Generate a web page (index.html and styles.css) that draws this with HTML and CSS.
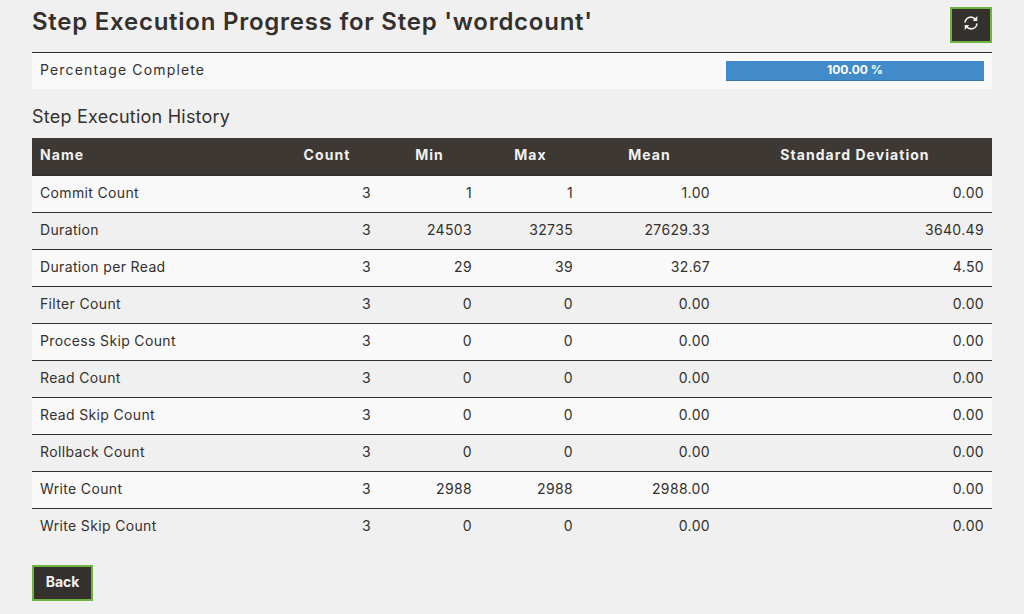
FILE: index.html
```
<!DOCTYPE html>
<html lang="en">
<head>
<meta charset="utf-8">
<title>Step Execution Progress</title>
<link rel="stylesheet" href="styles.css">
</head>
<body>
<main class="page">
<header class="page-header">
<h1 class="title"><span>Step Execution Progress for Step 'wordcount'</span></h1>
<button class="btn btn-refresh" aria-label="Refresh"><svg class="icon" viewBox="0 0 14 14" fill="none" stroke="currentColor" stroke-width="1.7"><path d="M1 6.500C1.300 3.200 4 1.200 7 1.200c2 0 3.500.9 4.600 2.300M13 7.500c-.3 3.300-3 5.300-6 5.300-2 0-3.500-.9-4.600-2.300"/><path d="M13.300 0v5H8.700zM.7 14V9h4.600z" fill="currentColor" stroke="none"/></svg></button>
</header>
<section class="progress-row">
<span class="progress-label">Percentage Complete</span>
<div class="progress-bar"><span>100.00 %</span></div>
</section>
<h2 class="subtitle"><span>Step Execution History</span></h2>
<table class="history">
<colgroup><col class="col-name"><col class="col-count"><col class="col-min"><col class="col-max"><col class="col-mean"><col></colgroup>
<thead><tr><th class="name">Name</th><th>Count</th><th>Min</th><th>Max</th><th>Mean</th><th>Standard Deviation</th></tr></thead>
<tbody>
<tr><td class="name">Commit Count</td><td>3</td><td>1</td><td>1</td><td>1.00</td><td>0.00</td></tr>
<tr><td class="name">Duration</td><td>3</td><td>24503</td><td>32735</td><td>27629.33</td><td>3640.49</td></tr>
<tr><td class="name">Duration per Read</td><td>3</td><td>29</td><td>39</td><td>32.67</td><td>4.50</td></tr>
<tr><td class="name">Filter Count</td><td>3</td><td>0</td><td>0</td><td>0.00</td><td>0.00</td></tr>
<tr><td class="name">Process Skip Count</td><td>3</td><td>0</td><td>0</td><td>0.00</td><td>0.00</td></tr>
<tr><td class="name">Read Count</td><td>3</td><td>0</td><td>0</td><td>0.00</td><td>0.00</td></tr>
<tr><td class="name">Read Skip Count</td><td>3</td><td>0</td><td>0</td><td>0.00</td><td>0.00</td></tr>
<tr><td class="name">Rollback Count</td><td>3</td><td>0</td><td>0</td><td>0.00</td><td>0.00</td></tr>
<tr><td class="name">Write Count</td><td>3</td><td>2988</td><td>2988</td><td>2988.00</td><td>0.00</td></tr>
<tr><td class="name">Write Skip Count</td><td>3</td><td>0</td><td>0</td><td>0.00</td><td>0.00</td></tr>
</tbody>
</table>
<button class="btn btn-back">Back</button>
</main>
</body>
</html>
```
FILE: styles.css
```
* { box-sizing: border-box; }
body { margin: 0; background: #f0f0f0; color: #34302d; font: 14px/20px Inter, "Open Sans", sans-serif; }
.page { width: 960px; height: 614px; margin: 0 auto; padding-top: 7px; overflow: hidden; }
.page-header { display: flex; justify-content: space-between; align-items: flex-start; height: 45px; }
.title { margin: 0; font-size: 24px; line-height: 29px; font-weight: 600; letter-spacing: 0.75px; white-space: nowrap; }
.btn { border: 2px solid #6db33f; border-radius: 0; background: #34302d; color: #f1f1f1; font: 700 14px/20px Inter, "Open Sans", sans-serif; padding: 0; }
.btn-refresh { width: 42px; height: 36px; display: flex; align-items: flex-start; justify-content: center; padding-top: 7px; }
.icon { width: 14px; height: 14px; display: block; }
.progress-row { display: flex; justify-content: space-between; height: 37px; padding: 8px; border-top: 1px solid #34302d; background: #f9f9f9; }
.progress-label { letter-spacing: 1.15px; line-height: 18px; }
.progress-bar { width: 258px; height: 20px; background: #428bca; box-shadow: inset 0 -1px 0 rgba(0, 0, 0, 0.15); color: #fff; font-size: 12px; line-height: 18px; font-weight: 700; text-align: center; }
.subtitle { margin: 18px 0 11px; height: 20px; font-size: 18px; line-height: 20px; font-weight: 400; letter-spacing: 0.23px; }
.history { width: 960px; table-layout: fixed; border-collapse: separate; border-spacing: 0; }
.col-name { width: 243px; }
.col-count { width: 104px; }
.col-min, .col-max { width: 101px; }
.col-mean { width: 137px; }
.history th { height: 38px; padding: 0 8px 2px; background: #3d3833; border-bottom: 2px solid #34302d; color: #f1f1f1; font-weight: 700; letter-spacing: 1.05px; text-align: center; }
.history td { height: 37px; padding: 0 8px 3px; border-top: 1px solid #34302d; text-align: right; letter-spacing: 0.35px; }
.history tr:first-child td { height: 36px; border-top: 0; padding-bottom: 2px; }
.history tbody tr:nth-child(odd) { background: #f9f9f9; }
.history .name { text-align: left; }
.btn-back { display: block; width: 61px; height: 36px; margin-top: 20px; padding-bottom: 2px; }
```
